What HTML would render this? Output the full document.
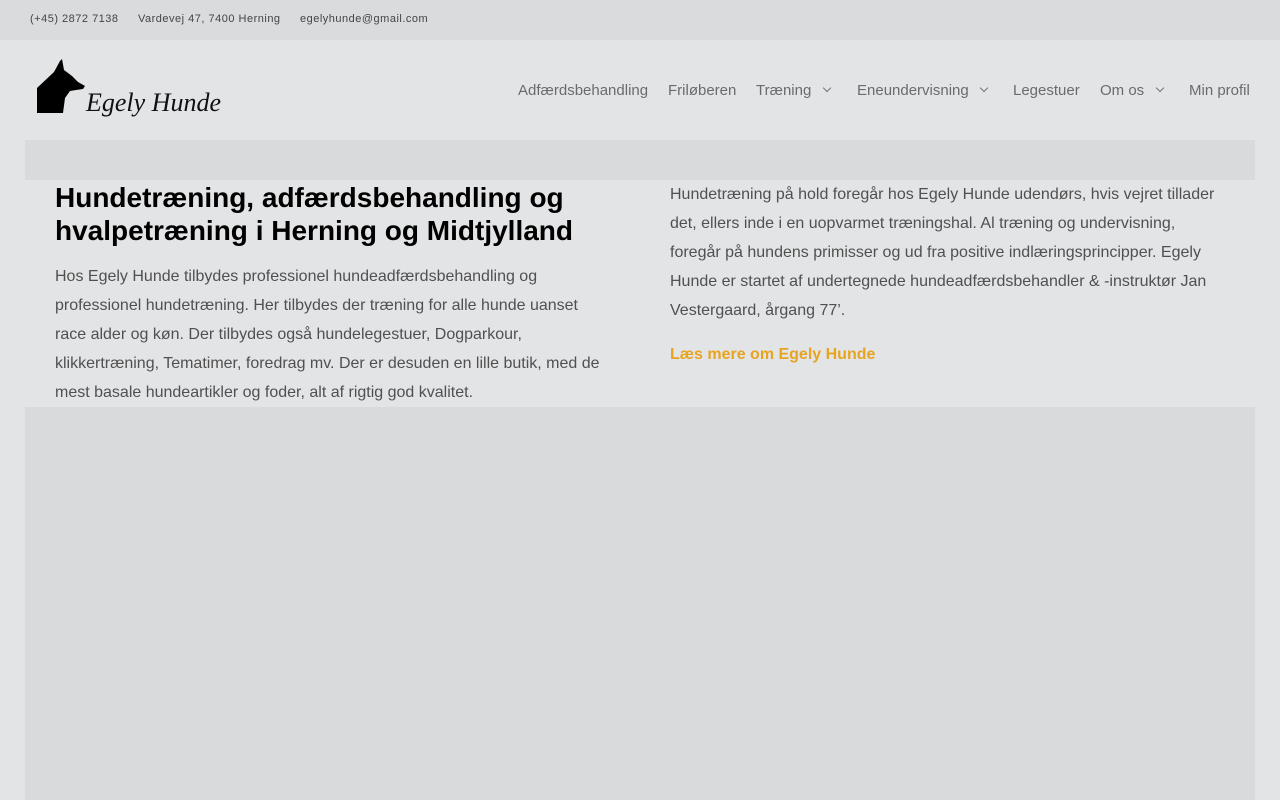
<!DOCTYPE html>
<html><head><meta charset="utf-8">
<style>
*{margin:0;padding:0;box-sizing:border-box}
body{width:1280px;height:800px;overflow:hidden;background:#e3e4e6;font-family:"Liberation Sans",sans-serif;position:relative}
.top{position:absolute;left:0;top:0;width:1280px;height:40px;background:#dadbdd;font-size:11px;color:#444;letter-spacing:.5px}
.top span{position:absolute;top:13px}
.hdr{position:absolute;top:40px;left:0;width:1280px;height:100px;background:#e3e4e6}
.nav{position:absolute;top:82px;font-size:15px;color:#6b6b6b;white-space:nowrap}
.nav span{position:absolute}
.chev{display:inline-block;width:6px;height:6px;border-right:1px solid #777;border-bottom:1px solid #777;transform:rotate(45deg);position:absolute;top:3px}
.band{position:absolute;left:25px;top:140px;width:1230px;height:40px;background:#d9dadc}
.main{position:absolute;left:25px;top:407px;width:1230px;height:393px;background:#d9dadc}
h1{position:absolute;left:55px;top:181px;width:560px;font-size:28px;line-height:33px;color:#000;font-weight:bold}
p{font-size:16px;line-height:29px;color:#505050}
.p1{position:absolute;left:55px;top:262px;width:550px}
.p2{position:absolute;left:670px;top:180px;width:560px}
.lnk{position:absolute;left:670px;top:346px;font-size:16px;font-weight:bold;color:#e8a41f}
</style></head><body>
<div class="top"><span style="left:30px">(+45) 2872 7138</span><span style="left:138px">Vardevej 47, 7400 Herning</span><span style="left:300px">egelyhunde@gmail.com</span></div>
<div class="hdr">
<svg style="position:absolute;left:36px;top:18px" width="52" height="56" viewBox="0 0 52 56">
<path d="M1 30 L18 14 L24 3 L26 1 L28 12 L36 18 L42 24 L49 28 L47 31 L40 32 L34 33 L29 40 L27 55 L1 55 Z" fill="#000"/>
</svg>
<div style="position:absolute;left:86px;top:48px;font-family:'Liberation Serif',serif;font-style:italic;font-size:26px;color:#111">Egely Hunde</div>
</div>
<div class="nav" style="left:0;width:1280px">
<span style="left:518px">Adfærdsbehandling</span>
<span style="left:668px">Friløberen</span>
<span style="left:756px">Træning</span><i class="chev" style="left:824px"></i>
<span style="left:857px">Eneundervisning</span><i class="chev" style="left:981px"></i>
<span style="left:1013px">Legestuer</span>
<span style="left:1100px">Om os</span><i class="chev" style="left:1157px"></i>
<span style="left:1189px">Min profil</span>
</div>
<div class="band"></div>
<h1>Hundetræning, adfærdsbehandling og hvalpetræning i Herning og Midtjylland</h1>
<p class="p1">Hos Egely Hunde tilbydes professionel hundeadfærdsbehandling og professionel hundetræning. Her tilbydes der træning for alle hunde uanset race alder og køn. Der tilbydes også hundelegestuer, Dogparkour, klikkertræning, Tematimer, foredrag mv. Der er desuden en lille butik, med de mest basale hundeartikler og foder, alt af rigtig god kvalitet.</p>
<p class="p2">Hundetræning på hold foregår hos Egely Hunde udendørs, hvis vejret tillader det, ellers inde i en uopvarmet træningshal. Al træning og undervisning, foregår på hundens primisser og ud fra positive indlæringsprincipper. Egely Hunde er startet af undertegnede hundeadfærdsbehandler &amp; -instruktør Jan Vestergaard, årgang 77’.</p>
<div class="lnk">Læs mere om Egely Hunde</div>
<div class="main"></div>
</body></html>
